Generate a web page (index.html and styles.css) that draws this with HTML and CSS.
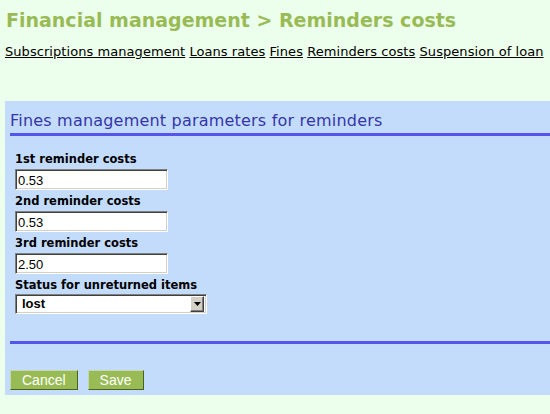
FILE: index.html
```html
<!DOCTYPE html>
<html>
<head>
<meta charset="utf-8">
<link rel="stylesheet" href="styles.css">
</head>
<body>
<h1 class="title">Financial management &gt; Reminders costs</h1>
<nav class="tabs">
  <a href="#">Subscriptions management</a>
  <a href="#">Loans rates</a>
  <a href="#">Fines</a>
  <a href="#">Reminders costs</a>
  <a href="#">Suspension of loan</a>
</nav>
<form class="panel">
  <h2 class="panel-title">Fines management parameters for reminders</h2>
  <div class="fields">
    <label class="lbl">1st reminder costs</label>
    <input class="txt" type="text" value="0.53">
    <label class="lbl">2nd reminder costs</label>
    <input class="txt" type="text" value="0.53">
    <label class="lbl">3rd reminder costs</label>
    <input class="txt" type="text" value="2.50">
    <label class="lbl">Status for unreturned items</label>
    <div class="select">
      <span class="select-val">lost</span>
      <span class="select-btn"><svg width="7" height="4" viewBox="0 0 7 4"><path d="M0 0h7L3.5 4z" fill="#000"/></svg></span>
    </div>
  </div>
  <div class="rule"></div>
  <div class="actions">
    <button type="button" class="btn">Cancel</button>
    <button type="button" class="btn">Save</button>
  </div>
</form>
</body>
</html>
```
FILE: styles.css
```css
html, body {
  margin: 0;
  padding: 0;
  background: #ecffec;
  overflow: hidden;
}
body {
  padding: 0 0 0 5px;
  font-family: "DejaVu Sans", Verdana, sans-serif;
  width: 545px;
}
.title {
  margin: 0;
  padding: 9px 0 0 1px;
  font-size: 19px;
  font-weight: bold;
  color: #99bb55;
  line-height: 23px;
  white-space: nowrap;
}
.tabs {
  margin-top: 12px;
  font-size: 13px;
  line-height: 16px;
  letter-spacing: 0.06px;
  white-space: nowrap;
}
.tabs a {
  color: #000;
  text-decoration: underline;
}
.panel {
  display: block;
  box-sizing: border-box;
  margin-top: 41px;
  background: #c4dcfc;
  padding: 10px 0 0 5px;
  height: 294px;
}
.panel-title {
  margin: 0;
  font-size: 16px;
  font-weight: normal;
  letter-spacing: 0.2px;
  color: #3535a8;
  line-height: 19px;
  padding-bottom: 3px;
  border-bottom: 3px solid #5555ee;
  white-space: nowrap;
}
.fields {
  display: flex;
  flex-direction: column;
  align-items: flex-start;
  padding: 15px 0 0 5px;
}
.lbl {
  font-size: 11.5px;
  font-weight: bold;
  color: #000;
  line-height: 16px;
}
.txt {
  box-sizing: border-box;
  width: 153px;
  height: 21px;
  margin: 2px 0 3px;
  padding: 1px 2px 0;
  border: 1px solid;
  border-color: #808080 #ffffff #ffffff #808080;
  box-shadow: inset 1px 1px 0 #404040, inset -1px -1px 0 #d4d0c8;
  background: #fff;
  color: #000;
  font-family: "Liberation Sans", Arial, sans-serif;
  font-size: 13px;
  outline: none;
}
.select {
  box-sizing: border-box;
  width: 192px;
  height: 20px;
  margin-top: 1px;
  display: flex;
  align-items: center;
  border: 1px solid;
  border-color: #808080 #ffffff #ffffff #808080;
  box-shadow: inset 1px 1px 0 #404040, inset -1px -1px 0 #d4d0c8;
  background: #fff;
}
.select-val {
  flex: 1;
  padding-left: 6px;
  font-family: "Liberation Sans", Arial, sans-serif;
  font-weight: bold;
  font-size: 13px;
  line-height: 16px;
}
.select-btn {
  box-sizing: border-box;
  width: 14px;
  height: 16px;
  margin-right: 2px;
  background: #d4d0c8;
  border: 1px solid;
  border-color: #ffffff #404040 #404040 #ffffff;
  box-shadow: inset -1px -1px 0 #808080;
  display: flex;
  align-items: center;
  justify-content: center;
}
.rule {
  margin-top: 27px;
  border-top: 3px solid #5555ee;
}
.actions {
  display: flex;
  gap: 10px;
  margin-top: 26px;
}
.btn {
  height: 20px;
  padding: 0 11px;
  background: #99bb55;
  color: #fff;
  border: 1px solid;
  border-color: #c6d6b0 #4a6420 #4a6420 #c6d6b0;
  font-family: "Liberation Sans", Arial, sans-serif;
  font-size: 14px;
  line-height: 17px;
}
```
